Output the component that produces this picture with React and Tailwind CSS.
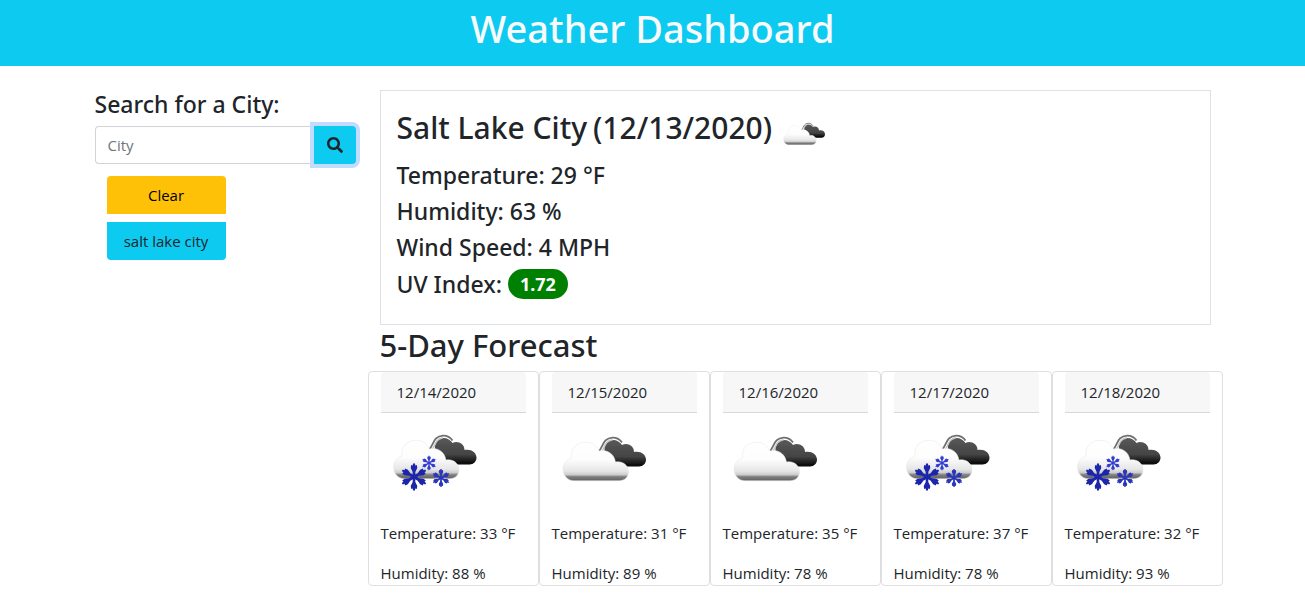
import { useId, useState } from "react";
import { FaSearch } from "react-icons/fa";

const forecast = [
  { date: "12/14/2020", temperature: 33, humidity: 88, snow: true },
  { date: "12/15/2020", temperature: 31, humidity: 89, snow: false },
  { date: "12/16/2020", temperature: 35, humidity: 78, snow: false },
  { date: "12/17/2020", temperature: 37, humidity: 78, snow: true },
  { date: "12/18/2020", temperature: 32, humidity: 93, snow: true },
];

function Snowflake({ x, y, r, fill }) {
  return (
    <g transform={`translate(${x} ${y}) scale(${r / 12})`} fill={fill}>
      {[0, 60, 120, 180, 240, 300].map((angle) => (
        <path
          key={angle}
          transform={`rotate(${angle})`}
          d="M-1.300 0L-1.300 -5L-3.300 -9L-2.800 -12L-1.200 -11.500L-1 -13.500H1L1.200 -11.500L2.800 -12L3.300 -9L1.300 -5L1.300 0Z"
        />
      ))}
    </g>
  );
}

function CloudIcon({ snow = false, className, label }) {
  const id = useId();
  return (
    <svg viewBox="0 0 100 100" className={className} role="img" aria-label={label}>
      <defs>
        <linearGradient id={`${id}w`} gradientUnits="userSpaceOnUse" x1="0" y1="29" x2="0" y2="68">
          <stop offset="0" stopColor="#ffffff" />
          <stop offset="0.45" stopColor="#fdfdfd" />
          <stop offset="0.75" stopColor="#e6e6e6" />
          <stop offset="0.84" stopColor="#cccccc" />
          <stop offset="0.89" stopColor="#808080" />
          <stop offset="1" stopColor="#606060" />
        </linearGradient>
        <linearGradient id={`${id}d`} gradientUnits="userSpaceOnUse" x1="0" y1="26" x2="0" y2="53">
          <stop offset="0" stopColor="#5a5a5a" />
          <stop offset="0.65" stopColor="#444444" />
          <stop offset="0.9" stopColor="#151515" />
          <stop offset="1" stopColor="#050505" />
        </linearGradient>
        <filter id={`${id}b`} x="-10%" y="-10%" width="120%" height="120%">
          <feGaussianBlur stdDeviation="0.7" />
        </filter>
      </defs>
      <g filter={`url(#${id}b)`}>
        <g transform={snow ? "translate(1.5 -2)" : undefined}>
          <path
            d="M53 40C51 32 55 27 61 27C65 27 68 29 70 32C75 29.500 82 32.500 82 39C88 37.500 94 41 94 46.500C94 50.500 91 53.500 87 53.500H64Z"
            fill={`url(#${id}d)`}
          />
          <path d="M46.500 39C51 34 51 25 60.500 24.600C65 24.500 68 26.500 70 29.500" fill="none" stroke="#6f6f6f" strokeWidth="1.800" />
          <path d="M50 38C53 34 53 28 60.500 26.800" fill="none" stroke="#c4c4c4" strokeWidth="1.500" />
          <path
            d="M22 67.700C15 67.700 11 62 11 56C11 51 14 47 19.500 45C18 35 25 29.300 34 29.300C40 29.300 44 32 47 38C54 36 62 40 63.500 49C70 47.500 76.500 52 76.500 58.500C76.500 64 73 67.700 67 67.700Z"
            fill={`url(#${id}w)`}
            stroke="#e4e4e4"
            strokeWidth="0.500"
          />
        </g>
        {snow && (
          <>
            <Snowflake x={33} y={64} r={12} fill="#1c25ac" />
            <Snowflake x={48} y={50} r={6.5} fill="#323ed0" />
            <Snowflake x={60} y={65} r={8} fill="#2a36bd" />
          </>
        )}
      </g>
    </svg>
  );
}

function SearchPanel() {
  const [city, setCity] = useState("");
  return (
    <aside className="w-1/4 px-3">
      <form onSubmit={(event) => event.preventDefault()}>
        <label htmlFor="city" className="mb-2 block font-['Noto_Sans',sans-serif] text-[23px] leading-7 font-medium">
          Search for a City:
        </label>
        <div className="flex h-[38px]">
          <input
            id="city"
            type="text"
            placeholder="City"
            value={city}
            onChange={(event) => setCity(event.target.value)}
            className="min-w-0 flex-1 rounded-l border border-r-0 border-[#ced4da] px-3 text-[15px] outline-none placeholder:text-[#6c757d]"
          />
          <button
            type="submit"
            aria-label="Search"
            className="flex w-[42px] items-center justify-center rounded-r bg-[#0dcaf0] ring-4 ring-[#c2dbfe]"
          >
            <FaSearch className="size-4" />
          </button>
        </div>
      </form>
      <div className="mx-3 mt-3 flex w-[119px] flex-col gap-2 text-[15px]">
        <button type="button" className="h-[38px] rounded-t bg-[#ffc107] text-black">
          Clear
        </button>
        <button type="button" className="h-[38px] rounded-b bg-[#0dcaf0]">
          salt lake city
        </button>
      </div>
    </aside>
  );
}

function CurrentWeather() {
  return (
    <section className="border border-[#dee2e6] px-4 pt-4 pb-[25px] font-['Noto_Sans',sans-serif]">
      <div className="flex h-[54px] items-start text-[30px] leading-[42px] font-medium">
        <h2 className="mr-1.5">Salt Lake City</h2>
        <span>(12/13/2020)</span>
        <CloudIcon className="ml-1.5 size-[50px] shrink-0 self-end" label="Cloudy" />
      </div>
      <div className="flex flex-col gap-2 text-[23px] leading-7 font-medium">
        <p>Temperature: 29 °F</p>
        <p>Humidity: 63 %</p>
        <p>Wind Speed: 4 MPH</p>
        <p className="flex items-center">
          UV Index:
          <span className="ml-1.5 rounded-full bg-[green] px-3 text-[18px] leading-[30px] font-bold text-white">1.72</span>
        </p>
      </div>
    </section>
  );
}

function ForecastCard({ day }) {
  return (
    <article className="rounded border border-[#dfdfdf] px-3 text-[15px] leading-6">
      <h3 className="rounded-t border-b border-[#d8d8d8] bg-[#f7f7f7] px-4 py-2">{day.date}</h3>
      <CloudIcon snow={day.snow} className="mb-2 size-[100px]" label={day.snow ? "Snow" : "Cloudy"} />
      <p className="mb-4 whitespace-nowrap">Temperature: {day.temperature} °F</p>
      <p className="whitespace-nowrap">Humidity: {day.humidity} %</p>
    </article>
  );
}

export default function App() {
  return (
    <div className="bg-white font-['Open_Sans','Noto_Sans',sans-serif] text-[#212529]">
      <header className="bg-[#0dcaf0] pt-1 pb-[14px] text-center text-[#f8f9fa]">
        <h1 className="font-['Noto_Sans',sans-serif] text-[38px] leading-[48px] font-medium">Weather Dashboard</h1>
      </header>
      <div className="mx-auto flex max-w-[1140px] pt-6">
        <SearchPanel />
        <main className="w-3/4 px-3">
          <CurrentWeather />
          <h2 className="mt-[2px] mb-2 font-['Noto_Sans',sans-serif] text-[31px] leading-9 font-medium">5-Day Forecast</h2>
          <div className="-mx-3 grid grid-cols-5">
            {forecast.map((day) => (
              <ForecastCard key={day.date} day={day} />
            ))}
          </div>
        </main>
      </div>
    </div>
  );
}
